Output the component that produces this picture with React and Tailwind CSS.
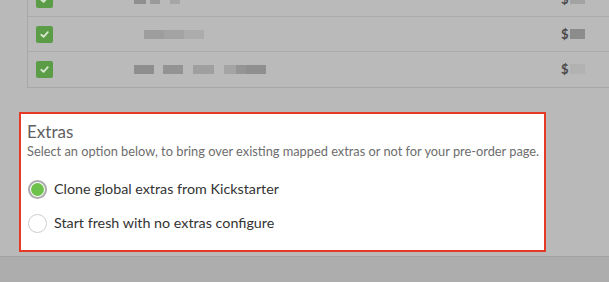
import { useState } from "react";

const rows = [
  { blocks: [[134, "#8f8f8f", 12], [150, "#9a9a9a", 10], [170, "#a6a6a6", 10]], price: "#a3a3a3" },
  { blocks: [[144, "#9d9d9d", 20], [164, "#a3a3a3", 20], [184, "#acacac", 20]], price: "#8c8c8c" },
  {
    blocks: [
      [134, "#8e8e8e", 20],
      [163, "#939393", 20],
      [193, "#9f9f9f", 21],
      [224, "#a4a4a4", 12],
      [236, "#959595", 10],
      [246, "#8f8f8f", 20],
    ],
    price: "#b2b2b2",
  },
];

function CheckBox() {
  return (
    <div className="w-[17px] h-[17px] rounded-[2px] bg-[#5b9c46] flex items-center justify-center shrink-0">
      <svg width="11" height="11" viewBox="0 0 12 12">
        <path d="M2.5 6.3 L5 8.6 L9.6 3.4" fill="none" stroke="#d7e6d1" strokeWidth="2" strokeLinecap="round" strokeLinejoin="round" />
      </svg>
    </div>
  );
}

function Radio({ checked, label, onClick }) {
  return (
    <button onClick={onClick} className="flex items-center gap-[7px] h-[22px] text-left">
      {checked ? (
        <span className="w-[19px] h-[19px] rounded-full border-2 border-[#ababab] p-[1px] bg-white shrink-0">
          <span className="block w-full h-full rounded-full bg-[#6cc24a]" />
        </span>
      ) : (
        <span className="w-[19px] h-[19px] rounded-full border-[1.5px] border-[#cdcdcd] bg-white shrink-0" />
      )}
      <span className="text-[14.3px] text-[#333333] leading-[20px] whitespace-nowrap">{label}</span>
    </button>
  );
}

export default function App() {
  const [choice, setChoice] = useState("clone");

  return (
    <div
      className="w-[609px] h-[282px] overflow-hidden bg-[#b9b9b9] flex flex-col"
      style={{ fontFamily: "Lato, 'Open Sans', sans-serif" }}
    >
      {/* dimmed rewards table */}
      <div className="mt-[-18px] ml-[27px] w-[620px] border-l border-b border-[#a8a8a8] bg-[#bababa] shrink-0">
        {rows.map((row, i) => (
          <div key={i} className={`relative h-[35px] flex items-center pl-[8px] ${i < 2 ? "border-b border-[#aaaaaa]" : ""}`}>
            <CheckBox />
            {row.blocks.map(([x, c, w], j) => (
              <div
                key={j}
                className="absolute top-[13px] h-[9px] blur-[0.5px]"
                style={{ left: x - 28, width: w, background: c }}
              />
            ))}
            <span className="absolute left-[533px] top-[8px] text-[13px] font-bold text-[#4a4a4a]">$</span>
            <div className="absolute left-[542px] top-[12px] w-[15px] h-[10px]" style={{ background: row.price }} />
          </div>
        ))}
      </div>

      {/* extras section */}
      <div className="mt-[24px] ml-[19px] w-[527px] h-[140px] border-2 border-[#e53a26] bg-white pl-[6px] pt-[8px] shrink-0">
        <h2 className="text-[17px] leading-[20px] text-[#5f5f5f]">Extras</h2>
        <p className="mt-[1px] text-[12.8px] leading-[16px] text-[#6d6d6d] whitespace-nowrap">
          Select an option below, to bring over existing mapped extras or not for your pre-order page.
        </p>
        <div className="mt-[19px] ml-[1px] flex flex-col gap-[12px]">
          <Radio checked={choice === "clone"} label="Clone global extras from Kickstarter" onClick={() => setChoice("clone")} />
          <Radio checked={choice === "fresh"} label="Start fresh with no extras configure" onClick={() => setChoice("fresh")} />
        </div>
      </div>

      <div className="mt-[4px] flex-1 border-t border-[#a2a2a2] bg-[#adadad]" />
    </div>
  );
}
